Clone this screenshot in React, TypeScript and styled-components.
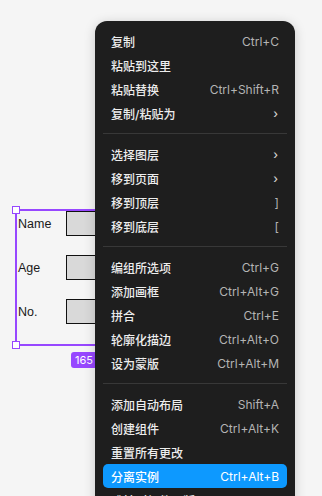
import * as React from 'react';
import styled, { createGlobalStyle } from 'styled-components';

const GlobalStyle = createGlobalStyle`
    * {
        box-sizing: border-box;
    }
    html, body {
        margin: 0;
        padding: 0;
        background: #f5f5f5;
        font-family: Inter, "Noto Sans CJK SC", sans-serif;
    }
`;

const Canvas = styled.main`
    position: relative;
    width: 322px;
    height: 496px;
    overflow: hidden;
    background: #f5f5f5;
`;

const Frame = styled.div`
    position: absolute;
    left: 15px;
    top: 209px;
    width: 140px;
    height: 137px;
    border: 2px solid #9747ff;
    padding: 0 0 0 1px;
    display: flex;
    flex-direction: column;
    gap: 19px;
`;

const Handle = styled.span<{ $corner: 'tl' | 'bl' }>`
    position: absolute;
    left: -5px;
    width: 8px;
    height: 8px;
    background: #fff;
    border: 1px solid #9747ff;
    ${({ $corner }) => ($corner === 'tl' ? 'top: -5px;' : 'bottom: -5px;')}
`;

const FieldRow = styled.div`
    display: flex;
    align-items: center;
    height: 25px;
`;

const FieldLabel = styled.span`
    width: 48px;
    font-family: "Liberation Sans", Arial, sans-serif;
    font-size: 12.5px;
    color: #1a1a1a;
`;

const FieldBox = styled.div`
    width: 80px;
    height: 25px;
    background: #d9d9d9;
    border: 1.5px solid #111;
`;

const SizeBadge = styled.div`
    position: absolute;
    left: 71px;
    top: 352px;
    height: 16px;
    padding: 0 20px 0 4px;
    border-radius: 3px;
    background: #9747ff;
    color: #fff;
    font-size: 11px;
    line-height: 16px;
    font-family: Inter, sans-serif;
`;

const Menu = styled.div`
    position: absolute;
    left: 95px;
    top: 21px;
    width: 200px;
    height: 520px;
    padding: 8px;
    border-radius: 12px;
    background: #1e1e1e;
    box-shadow: 0 2px 12px rgba(0, 0, 0, 0.18);
`;

const Item = styled.div<{ $active?: boolean }>`
    display: flex;
    align-items: center;
    justify-content: space-between;
    height: 24px;
    padding: 0 8px;
    border-radius: 5px;
    background: ${({ $active }) => ($active ? '#0d99ff' : 'transparent')};
    color: ${({ $active }) => ($active ? '#ffffff' : '#ededed')};
    font-size: 12px;
    font-weight: 500;
`;

const Shortcut = styled.span<{ $active?: boolean }>`
    color: ${({ $active }) => ($active ? '#ffffff' : '#b4b4b4')};
    font-size: 12px;
    font-weight: 400;
`;

const Chevron = styled.span`
    color: #d0d0d0;
    font-size: 12px;
    margin-right: 1px;
`;

const Divider = styled.div`
    height: 1px;
    margin: 8px 0;
    background: #383838;
`;

type Entry = { label: string; key?: string; sub?: boolean; active?: boolean } | 'sep';

const entries: Entry[] = [
    { label: '复制', key: 'Ctrl+C' },
    { label: '粘贴到这里' },
    { label: '粘贴替换', key: 'Ctrl+Shift+R' },
    { label: '复制/粘贴为', sub: true },
    'sep',
    { label: '选择图层', sub: true },
    { label: '移到页面', sub: true },
    { label: '移到顶层', key: ']' },
    { label: '移到底层', key: '[' },
    'sep',
    { label: '编组所选项', key: 'Ctrl+G' },
    { label: '添加画框', key: 'Ctrl+Alt+G' },
    { label: '拼合', key: 'Ctrl+E' },
    { label: '轮廓化描边', key: 'Ctrl+Alt+O' },
    { label: '设为蒙版', key: 'Ctrl+Alt+M' },
    'sep',
    { label: '添加自动布局', key: 'Shift+A' },
    { label: '创建组件', key: 'Ctrl+Alt+K' },
    { label: '重置所有更改' },
    { label: '分离实例', key: 'Ctrl+Alt+B', active: true },
    { label: '跳转到组件母版' }
];

const App = () => (
    <>
        <GlobalStyle />
        <Canvas>
            <Frame>
                <Handle $corner="tl" />
                <Handle $corner="bl" />
                {['Name', 'Age', 'No.'].map(name => (
                    <FieldRow key={name}>
                        <FieldLabel>{name}</FieldLabel>
                        <FieldBox />
                    </FieldRow>
                ))}
            </Frame>
            <SizeBadge>165</SizeBadge>
            <Menu>
                {entries.map((e, i) =>
                    e === 'sep' ? (
                        <Divider key={i} />
                    ) : (
                        <Item key={i} $active={e.active}>
                            <span>{e.label}</span>
                            {e.key && <Shortcut $active={e.active}>{e.key}</Shortcut>}
                            {e.sub && <Chevron>›</Chevron>}
                        </Item>
                    )
                )}
            </Menu>
        </Canvas>
    </>
);

export default App;
